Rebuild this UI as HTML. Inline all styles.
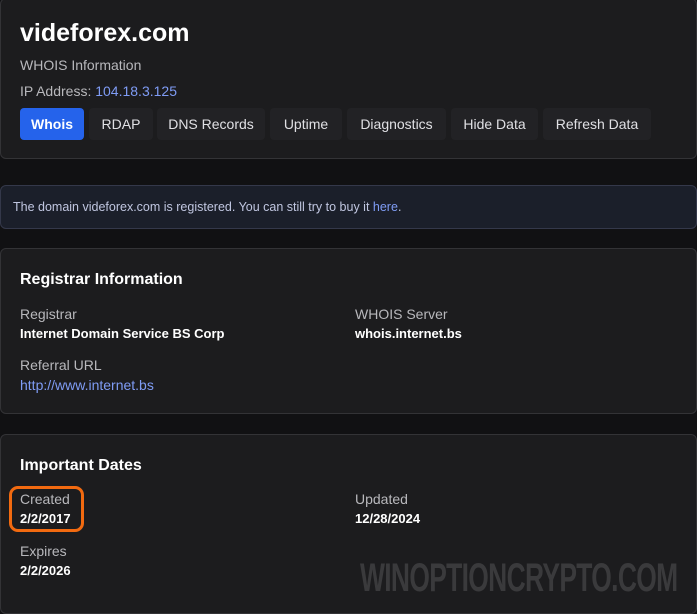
<!DOCTYPE html>
<html><head><style>
*{margin:0;padding:0;box-sizing:border-box}
body{width:697px;height:600px;background:#111113;font-family:"Liberation Sans",sans-serif;color:#fff;position:relative;overflow:hidden}
.card{position:absolute;left:0;width:697px;background:#1c1c1e;border:1px solid #333336;border-radius:6px}
.a{position:absolute;white-space:nowrap}
.lbl{color:#b8b8bc;font-size:14px}
.val{color:#fff;font-size:13px;font-weight:bold}
.btn{position:absolute;top:108px;height:32px;background:#222225;border-radius:4px;color:#e0e0e4;font-size:14px;line-height:32px;text-align:center}
.link{color:#7f9cf5}
h2{font-size:16px;font-weight:bold}
</style></head><body>
<div class="card" style="top:-2px;height:161px"></div>
<div class="a" style="left:20px;top:19px;font-size:25px;font-weight:bold">videforex.com</div>
<div class="a lbl" style="left:20px;top:57px">WHOIS Information</div>
<div class="a lbl" style="left:20px;top:83px">IP Address: <span class="link">104.18.3.125</span></div>
<div class="btn" style="left:20px;width:64px;background:#2563eb;color:#fff;font-weight:bold">Whois</div>
<div class="btn" style="left:89px;width:64px">RDAP</div>
<div class="btn" style="left:157px;width:108px">DNS Records</div>
<div class="btn" style="left:270px;width:72px">Uptime</div>
<div class="btn" style="left:347px;width:99px">Diagnostics</div>
<div class="btn" style="left:451px;width:87px">Hide Data</div>
<div class="btn" style="left:543px;width:108px">Refresh Data</div>

<div class="card" style="top:185px;height:44px;background:#1b1f2a;border-color:#34384a"></div>
<div class="a" style="left:13px;top:200px;font-size:12.5px;color:#c0c6e0">The domain videforex.com is registered. You can still try to buy it <span class="link">here</span>.</div>

<div class="card" style="top:248px;height:166px"></div>
<h2 class="a" style="left:20px;top:271px">Registrar Information</h2>
<div class="a lbl" style="left:20px;top:306px">Registrar</div>
<div class="a val" style="left:20px;top:326px">Internet Domain Service BS Corp</div>
<div class="a lbl" style="left:355px;top:306px">WHOIS Server</div>
<div class="a val" style="left:355px;top:326px">whois.internet.bs</div>
<div class="a lbl" style="left:20px;top:357px">Referral URL</div>
<div class="a link" style="left:20px;top:377px;font-size:14px">http://www.internet.bs</div>

<div class="card" style="top:434px;height:180px"></div>
<h2 class="a" style="left:20px;top:457px">Important Dates</h2>
<div class="a" style="left:9px;top:486px;width:75px;height:46px;border:3px solid #f26a10;border-radius:9px"></div>
<div class="a lbl" style="left:20px;top:491px">Created</div>
<div class="a val" style="left:20px;top:511px">2/2/2017</div>
<div class="a lbl" style="left:355px;top:491px">Updated</div>
<div class="a val" style="left:355px;top:511px">12/28/2024</div>
<div class="a lbl" style="left:20px;top:543px">Expires</div>
<div class="a val" style="left:20px;top:563px">2/2/2026</div>
<div class="a" style="left:360px;top:556px;font-size:40px;font-weight:bold;color:#3a3a3c;letter-spacing:-1px;transform:scaleX(0.66);transform-origin:left top">WINOPTIONCRYPTO.COM</div>
</body></html>
